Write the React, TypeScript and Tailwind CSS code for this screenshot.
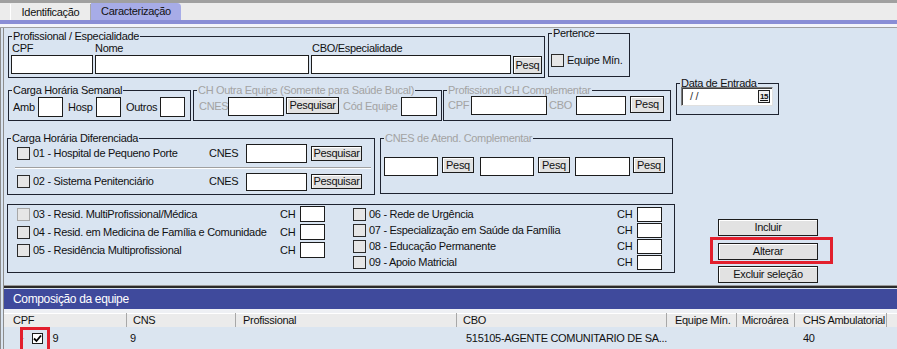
import React from 'react';

type Kids = { children?: React.ReactNode; className?: string };

const GroupBox = ({
  title,
  muted,
  className = '',
  children,
}: Kids & { title?: string; muted?: boolean }) => (
  <fieldset className={`shrink-0 border border-[#1e2330] ${className}`}>
    {title && (
      <legend
        className={`ml-[3px] px-px h-[12px] leading-[12px] ${muted ? 'text-[#a3a3a3]' : 'text-[#111]'}`}
      >
        {title}
      </legend>
    )}
    {children}
  </fieldset>
);

const Field = ({ className = '' }: Kids) => (
  <div className={`shrink-0 bg-white border border-[#1c1c1c] ${className}`} />
);

const Btn = ({ label, className = '' }: Kids & { label: string }) => (
  <div
    className={`shrink-0 flex items-center justify-center bg-[#e2e2e2] border border-[#1c1c1c] shadow-[inset_1px_1px_0_#ffffff] leading-none ${className}`}
  >
    {label}
  </div>
);

const Check = ({ muted, className = '' }: Kids & { muted?: boolean }) => (
  <div
    className={`shrink-0 w-[13px] h-[13px] bg-[#e6e6e6] border ${muted ? 'border-[#a8a8a8]' : 'border-[#2a2a2a]'} ${className}`}
  />
);

const leftItems = [
  { label: '03 - Resid. MultiProfissional/Médica', muted: true },
  { label: '04 - Resid. em Medicina de Família e Comunidade', muted: false },
  { label: '05 - Residência Multiprofissional', muted: false },
];

const rightItems = [
  '06 - Rede de Urgência',
  '07 - Especialização em Saúde da Família',
  '08 - Educação Permanente',
  '09 - Apoio Matricial',
];

const columns = [
  { name: 'CPF', w: 'w-[123px]', pl: 'pl-[9px]' },
  { name: 'CNS', w: 'w-[109px]', pl: 'pl-[6px]' },
  { name: 'Profissional', w: 'w-[221px]', pl: 'pl-[7px]' },
  { name: 'CBO', w: 'w-[210px]', pl: 'pl-[6px]' },
  { name: 'Equipe Mín.', w: 'w-[70px]', pl: 'pl-[8px]' },
  { name: 'Microárea', w: 'w-[58px]', pl: 'pl-[5px]' },
  { name: 'CHS Ambulatorial', w: 'w-[92px]', pl: 'pl-[8px]' },
];

export default function App() {
  return (
    <div className="w-[897px] h-[349px] overflow-hidden bg-[#d9e4f1] text-[11px] leading-[13px] tracking-[-0.3px] text-[#111] font-['Liberation_Sans',Arial,sans-serif]">
      {/* tabs */}
      <div className="h-[20px] bg-[#ececec] border-t-[3px] border-[#a0a0a0] flex items-end pl-[10px]">
        <div className="h-[16px] w-[81px] flex items-center justify-center border-l border-white border-r border-r-[#a8a8a8]">
          Identificação
        </div>
        <div className="h-[17px] w-[90px] flex items-center justify-center bg-[#a7ace7] rounded-tr-[4px]">
          Caracterização
        </div>
      </div>
      <div className="h-[4px] bg-[#8a8ed6]" />
      <div className="h-[3px] bg-[#f3f4fa]" />
      <div className="h-px bg-[#a0a0a0]" />

      <div className="border-l-4 border-double border-[#8c8c8c] h-[321px]">
        {/* row 1 */}
        <div className="flex items-start pt-[2px]">
          <GroupBox title="Profissional / Especialidade" className="ml-[4px] w-[537px] h-[48px]">
            <div className="flex items-end pl-[2px] gap-[2px]">
              <div className="flex flex-col w-[82px]">
                <span className="h-[13px] pl-px">CPF</span>
                <Field className="w-[82px] h-[19px]" />
              </div>
              <div className="flex flex-col w-[214px]">
                <span className="h-[13px]">Nome</span>
                <Field className="w-[214px] h-[19px]" />
              </div>
              <div className="flex flex-col w-[200px]">
                <span className="h-[13px] pl-px">CBO/Especialidade</span>
                <Field className="w-[200px] h-[19px]" />
              </div>
              <Btn label="Pesq" className="w-[29px] h-[18px]" />
            </div>
          </GroupBox>
          <GroupBox title="Pertence" className="ml-[3px] mt-[-3px] w-[82px] h-[50px]">
            <div className="flex items-center gap-[3px] pl-[2px] mt-[15px]">
              <Check />
              <span>Equipe Mín.</span>
            </div>
          </GroupBox>
        </div>

        {/* row 2 */}
        <div className="flex items-start mt-[6px]">
          <GroupBox title="Carga Horária Semanal" className="ml-[4px] w-[183px] h-[37px]">
            <div className="flex items-center pl-[4px] mt-px">
              <span className="w-[25px]">Amb</span>
              <Field className="w-[25px] h-[20px]" />
              <span className="ml-[5px] w-[28px]">Hosp</span>
              <Field className="w-[25px] h-[20px]" />
              <span className="ml-[5px] w-[34px]">Outros</span>
              <Field className="w-[25px] h-[20px]" />
            </div>
          </GroupBox>
          <GroupBox
            title="CH Outra Equipe (Somente para Saúde Bucal)"
            muted
            className="ml-[2px] w-[249px] h-[37px]"
          >
            <div className="flex items-start pl-[5px] mt-px">
              <span className="w-[29px] mt-[3px] text-[#a3a3a3]">CNES</span>
              <Field className="w-[56px] h-[19px]" />
              <Btn label="Pesquisar" className="ml-[2px] w-[53px] h-[17px]" />
              <span className="ml-[4px] w-[58px] mt-[3px] text-[#a3a3a3]">Cód Equipe</span>
              <Field className="w-[36px] h-[19px]" />
            </div>
          </GroupBox>
          <GroupBox title="Profissional CH Complementar" muted className="ml-px w-[228px] h-[37px]">
            <div className="flex items-start pl-[4px]">
              <span className="w-[23px] mt-[3px] text-[#a3a3a3]">CPF</span>
              <Field className="w-[76px] h-[19px]" />
              <span className="ml-[2px] w-[27px] mt-[3px] text-[#a3a3a3]">CBO</span>
              <Field className="w-[50px] h-[19px]" />
              <Btn label="Pesq" className="ml-[4px] w-[34px] h-[17px]" />
            </div>
          </GroupBox>
          <GroupBox title="Data de Entrada" className="ml-[5px] mt-[-7px] w-[103px] h-[38px]">
            <div className="ml-[4px] mt-[-2px] w-[92px] h-[19px] bg-white border border-[#7a7a7a] border-b-[#e0e0e0] border-r-[#e0e0e0] shadow-[inset_1px_1px_0_#404040] flex items-center justify-between pl-[8px] pr-[2px]">
              <span className="text-[#333]">/ /</span>
              <div className="w-[12px] h-[13px] border border-[#202020] bg-[#f0f0f0] flex items-center justify-center text-[8px] leading-none font-bold tracking-[-0.5px] underline">
                15
              </div>
            </div>
          </GroupBox>
        </div>

        {/* row 3 */}
        <div className="flex items-start mt-[11px]">
          <GroupBox title="Carga Horária Diferenciada" className="ml-[3px] w-[368px] h-[63px]">
            <div className="flex items-center h-[20px] mt-[-1px] pl-[9px]">
              <Check />
              <span className="ml-[3px] w-[176px] whitespace-nowrap">01 - Hospital de Pequeno Porte</span>
              <span className="w-[37px]">CNES</span>
              <Field className="w-[61px] h-[19px]" />
              <Btn label="Pesquisar" className="ml-[4px] w-[51px] h-[15px]" />
            </div>
            <div className="ml-[7px] mr-[3px] mt-[4px] h-px bg-[#a0a0a0]" />
            <div className="ml-[7px] mr-[3px] h-px bg-white" />
            <div className="flex items-center h-[19px] mt-[3px] pl-[9px]">
              <Check />
              <span className="ml-[3px] w-[176px] whitespace-nowrap">02 - Sistema Penitenciário</span>
              <span className="w-[37px]">CNES</span>
              <Field className="w-[61px] h-[18px]" />
              <Btn label="Pesquisar" className="ml-[4px] w-[51px] h-[15px]" />
            </div>
          </GroupBox>
          <GroupBox title="CNES de Atend. Complementar" muted className="ml-[5px] w-[293px] h-[62px]">
            <div className="flex items-start pl-[3px] mt-[13px]">
              <Field className="w-[54px] h-[19px]" />
              <Btn label="Pesq" className="ml-[4px] w-[32px] h-[16px]" />
              <Field className="ml-[6px] w-[54px] h-[19px]" />
              <Btn label="Pesq" className="ml-[4px] w-[32px] h-[16px]" />
              <Field className="ml-[5px] w-[55px] h-[19px]" />
              <Btn label="Pesq" className="ml-[3px] w-[32px] h-[16px]" />
            </div>
          </GroupBox>
        </div>

        {/* row 4 */}
        <div className="flex items-start mt-[9px] h-[69px]">
          <GroupBox className="ml-[3px] w-[668px] h-[69px] flex">
            <div className="flex flex-col pl-[9px]">
              {leftItems.map(item => (
                <div key={item.label} className="flex items-center h-[18px]">
                  <Check muted={item.muted} />
                  <span className="ml-[3px] w-[247px] whitespace-nowrap">{item.label}</span>
                  <span className="w-[20px]">CH</span>
                  <Field className="w-[25px] h-[16px]" />
                </div>
              ))}
            </div>
            <div className="flex flex-col ml-[28px] mt-px">
              {rightItems.map(label => (
                <div key={label} className="flex items-center h-[16px]">
                  <Check />
                  <span className="ml-[3px] w-[248px] whitespace-nowrap">{label}</span>
                  <span className="w-[20px]">CH</span>
                  <Field className="w-[25px] h-[15px]" />
                </div>
              ))}
            </div>
          </GroupBox>
          <div className="flex flex-col ml-[43px] mt-[15px]">
            <Btn label="Incluir" className="w-[100px] h-[17px]" />
            <div className="relative mt-[7px]">
              <Btn label="Alterar" className="w-[100px] h-[17px]" />
              <div className="absolute left-[-8px] top-[-6px] w-[123px] h-[27px] border-[3px] border-[#e21f2d]" />
            </div>
            <Btn label="Excluir seleção" className="mt-[6px] w-[100px] h-[17px]" />
          </div>
        </div>

        {/* team list */}
        <div className="mt-[12px] h-px bg-[#9a9a9a]" />
        <div className="h-[2px] bg-[#2a2a2a]" />
        <div className="h-px bg-[#d9e4f1]" />
        <div className="h-[20px] bg-[#3f4a9c] text-white text-[12px] flex items-center pl-[9px] tracking-[-0.35px]">
          Composição da equipe
        </div>
        <div className="h-[4px] bg-[#eef0f4]" />
        <div className="flex h-[14px] bg-[#ebebeb] shadow-[inset_0_1px_0_#ffffff]">
          {columns.map(col => (
            <div
              key={col.name}
              className={`${col.w} ${col.pl} shrink-0 border-r border-[#a8a8a8] flex items-center whitespace-nowrap`}
            >
              {col.name}
            </div>
          ))}
        </div>
        <div className="flex h-[22px] items-center bg-[#dbe5f0]">
          <div className="w-[123px] shrink-0 flex items-center relative h-full">
            <span className="ml-[18px] text-[#9a9a9a] text-[8px]">·</span>
            <div className="ml-[8px] w-[11px] h-[11px] bg-white border border-[#1c1c1c] flex items-center justify-center">
              <svg width="9" height="9" viewBox="0 0 9 9">
                <path d="M1 4.5 L3.5 7 L8 1.5" stroke="#000" strokeWidth="1.8" fill="none" />
              </svg>
            </div>
            <span className="ml-[9px]">9</span>
            <div className="absolute left-[16px] top-0 w-[30px] h-[26px] border-[3px] border-[#e21f2d]" />
          </div>
          <div className="w-[109px] shrink-0 pl-[3px]">9</div>
          <div className="w-[221px] shrink-0" />
          <div className="w-[210px] shrink-0 pl-[9px] whitespace-nowrap">515105-AGENTE COMUNITARIO DE SA...</div>
          <div className="w-[70px] shrink-0" />
          <div className="w-[58px] shrink-0" />
          <div className="w-[92px] shrink-0 pl-[8px]">40</div>
        </div>
      </div>
    </div>
  );
}
